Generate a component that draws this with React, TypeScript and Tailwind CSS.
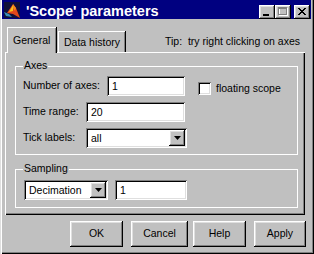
import React from "react";

const raised =
  "shadow-[inset_-1px_-1px_#000,inset_1px_1px_#fff,inset_-2px_-2px_#808080,inset_2px_2px_#dfdfdf]";
const sunken =
  "shadow-[inset_1px_1px_#808080,inset_-1px_-1px_#fff,inset_2px_2px_#000,inset_-2px_-2px_#dfdfdf]";
const frame = "shadow-[inset_0_0_0_1px_#fff]";

function MatlabIcon() {
  return (
    <svg width="16" height="16" viewBox="0 0 16 16" className="ml-[2px] shrink-0">
      <rect x="0" y="0" width="16" height="16" fill="#10103a" />
      <polygon points="0,10 5,12 8,15 2,14" fill="#3a8fb7" />
      <polygon points="3,11 9,2 12,6 16,16 9,12" fill="#e2481b" />
      <polygon points="5,10 9,3 9,9" fill="#f6c21a" />
      <polygon points="9,2 12,6 11,9 9,6" fill="#f08a1c" />
    </svg>
  );
}

function CaptionButton({ kind }: { kind: "min" | "max" | "close" }) {
  return (
    <div className={`w-[16px] h-[14px] bg-[#c0c0c0] ${raised} flex items-center justify-center`}>
      <svg width="16" height="14" viewBox="0 0 16 14">
        {kind === "min" && <rect x="4" y="9" width="6" height="2" fill="#000" />}
        {kind === "max" && (
          <g>
            <rect x="4.5" y="3.5" width="8" height="7" fill="none" stroke="#fff" />
            <rect x="3.5" y="2.5" width="8" height="7" fill="none" stroke="#808080" />
            <rect x="3" y="3" width="9" height="1" fill="#808080" />
          </g>
        )}
        {kind === "close" && (
          <path d="M4 3 L11 10 M5 3 L12 10 M11 3 L4 10 M12 3 L5 10" stroke="#000" strokeWidth="1" fill="none" />
        )}
      </svg>
    </div>
  );
}

function Field({ width, value }: { width: string; value: string }) {
  return (
    <div className={`${width} h-[20px] bg-white ${sunken} flex items-center pl-[5px]`}>
      <span className="leading-none">{value}</span>
    </div>
  );
}

function Dropdown({ width, value }: { width: string; value: string }) {
  return (
    <div className={`${width} h-[20px] bg-white ${sunken} flex items-center p-[2px]`}>
      <span className="flex-1 pl-[3px] leading-none">{value}</span>
      <div className={`w-[16px] h-[16px] bg-[#c0c0c0] ${raised} flex items-center justify-center`}>
        <svg width="7" height="4" viewBox="0 0 7 4">
          <polygon points="0,0 7,0 3.5,4" fill="#000" />
        </svg>
      </div>
    </div>
  );
}

function GroupBox({ title, className, children }: { title: string; className: string; children: React.ReactNode }) {
  return (
    <div className={`relative w-[283px] ${frame} ${className}`}>
      <span className="absolute left-[8px] top-[-7px] bg-[#c0c0c0] px-[1px] leading-[13px]">{title}</span>
      {children}
    </div>
  );
}

function PushButton({ label, className }: { label: string; className: string }) {
  return (
    <div className={`h-[26px] bg-[#c0c0c0] ${raised} flex items-center justify-center ${className}`}>
      {label}
    </div>
  );
}

export default function App() {
  return (
    <div
      className={`w-[314px] h-[254px] bg-[#c0c0c0] flex flex-col text-[10.5px] text-black font-[Liberation_Sans,Arial,sans-serif] shadow-[inset_1px_0_#dfdfdf,inset_2px_0_#fff,inset_-1px_-1px_#000,inset_-2px_-2px_#808080]`}
    >
      <div className="ml-[2px] w-[309px] h-[19px] bg-[#000080] flex items-start">
        <div className="mt-[2px]">
          <MatlabIcon />
        </div>
        <span className="ml-[6px] mt-[3px] text-white font-bold text-[14.5px] leading-[16px]">'Scope' parameters</span>
        <div className="ml-auto mr-[1px] mt-[5px] flex">
          <CaptionButton kind="min" />
          <CaptionButton kind="max" />
          <div className="ml-[3px]">
            <CaptionButton kind="close" />
          </div>
        </div>
      </div>

      <div className="ml-[5px] w-[300px]">
        <div className="h-[33px] flex items-end">
          <div className="relative z-10 ml-[2px] w-[49px] h-[26px] -mb-px bg-[#c0c0c0] border-t border-l border-white shadow-[inset_-1px_0_#808080,1px_0_#000] pl-[5px] pt-[6px] leading-[13px]">
            General
          </div>
          <div className="ml-[2px] w-[67px] h-[21px] bg-[#c0c0c0] border-t border-l border-white shadow-[inset_-1px_0_#808080,1px_0_#000] pl-[5px] pt-[4px] leading-[13px]">
            Data history
          </div>
          <span className="self-start ml-auto mr-[5px] mt-[16px] leading-[13px]">Tip:&nbsp; try right clicking on axes</span>
        </div>

        <div className="h-[163px] pt-[14px] pl-[10px] shadow-[inset_1px_1px_#fff,inset_-1px_-1px_#000,inset_-2px_-2px_#808080]">
          <GroupBox title="Axes" className="h-[89px] pt-[10px] pl-[8px]">
            <div className="flex items-center h-[20px]">
              <span className="w-[84px]">Number of axes:</span>
              <Field width="w-[78px]" value="1" />
              <div className="self-start mt-[6px] ml-[13px] flex items-center">
                <div className={`w-[13px] h-[13px] bg-white ${sunken}`} />
                <span className="ml-[5px] leading-[13px]">floating scope</span>
              </div>
            </div>
            <div className="flex items-center h-[20px] mt-[6px]">
              <span className="w-[63px]">Time range:</span>
              <Field width="w-[99px]" value="20" />
            </div>
            <div className="flex items-center h-[20px] mt-[6px]">
              <span className="w-[63px]">Tick labels:</span>
              <Dropdown width="w-[101px]" value="all" />
            </div>
          </GroupBox>

          <GroupBox title="Sampling" className="mt-[14px] h-[39px] pt-[11px] pl-[9px]">
            <div className="flex items-center">
              <Dropdown width="w-[84px]" value="Decimation" />
              <div className="ml-[7px]">
                <Field width="w-[72px]" value="1" />
              </div>
            </div>
          </GroupBox>
        </div>
      </div>

      <div className="mt-[6px] flex">
        <PushButton label="OK" className="ml-[70px] w-[53px]" />
        <PushButton label="Cancel" className="ml-[8px] w-[57px]" />
        <PushButton label="Help" className="ml-[5px] w-[53px]" />
        <PushButton label="Apply" className="ml-[8px] w-[52px]" />
      </div>
    </div>
  );
}
